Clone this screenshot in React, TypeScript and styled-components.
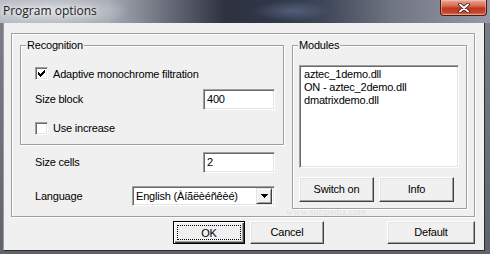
import styled, { createGlobalStyle } from "styled-components";

const GlobalStyle = createGlobalStyle`
  html, body {
    margin: 0;
    padding: 0;
    width: 490px;
    height: 254px;
    overflow: hidden;
    background: #30343f;
  }
  * {
    box-sizing: border-box;
  }
`;

const Window = styled.div`
  position: relative;
  width: 490px;
  height: 254px;
  display: flex;
  flex-direction: column;
  font-family: "Liberation Sans", Arial, sans-serif;
  font-size: 11px;
  letter-spacing: -0.2px;
  color: #000;
`;

const TitleBar = styled.div`
  height: 23px;
  flex: none;
  display: flex;
  align-items: flex-start;
  padding-left: 3px;
  background:
    radial-gradient(ellipse 40px 10px at 292px 11px, rgba(110, 128, 160, 0.5), transparent),
    radial-gradient(ellipse 80px 16px at 50px 11px, rgba(225, 228, 234, 0.8), transparent),
    linear-gradient(
      90deg,
      #b4b8c0 0%,
      #a8acb5 22%,
      #6a6e7a 34%,
      #2e3240 46%,
      #30374a 56%,
      #3e4658 66%,
      #707582 80%,
      #959aa4 100%
    );
`;

const TitleText = styled.span`
  margin-top: 3px;
  font-family: "Open Sans", "Noto Sans", sans-serif;
  font-size: 12px;
  letter-spacing: 0;
  line-height: 16px;
  color: #1c1c1c;
  text-shadow: 0 0 4px rgba(255, 255, 255, 0.9), 0 0 8px rgba(255, 255, 255, 0.7);
`;

const CloseButton = styled.div`
  margin-left: auto;
  margin-right: 3px;
  width: 47px;
  height: 16px;
  display: flex;
  align-items: center;
  justify-content: center;
  border: 1px solid #4a1a14;
  border-top: none;
  border-radius: 0 0 4px 4px;
  background: linear-gradient(180deg, #e9a996 0%, #d66a50 40%, #c0361c 55%, #c84a2e 85%, #e07a5c 100%);
  box-shadow: inset 0 0 0 1px rgba(255, 210, 200, 0.45);
`;

const Frame = styled.div`
  flex: 1;
  display: flex;
  padding: 0 5px 3px 3px;
  background: linear-gradient(180deg, #7a7e88 0%, #5f636c 100%);
`;

const Client = styled.div`
  position: relative;
  flex: 1;
  display: flex;
  flex-direction: column;
  padding: 10px 9px 0 7px;
  background: #f0f0f0;
  border-left: 1px solid #9a9a9a;
  border-right: 1px solid #2c2c2c;
  border-bottom: 1px solid #2c2c2c;
`;

const Panel = styled.div`
  height: 184px;
  display: flex;
  align-items: flex-start;
  gap: 8px;
  padding: 11px 7px 0 8px;
  border: 1px solid #a0a0a0;
  box-shadow: inset 1px 1px 0 #fff, 1px 1px 0 #fff;
`;

const Column = styled.div<{ $w: number }>`
  width: ${(p) => p.$w}px;
  flex: none;
  display: flex;
  flex-direction: column;
`;

const Group = styled.div<{ $h: number }>`
  height: ${(p) => p.$h}px;
  display: flex;
  flex-direction: column;
  border: 1px solid #a0a0a0;
  box-shadow: inset 1px 1px 0 #fff, 1px 1px 0 #fff;
`;

const GroupTitle = styled.span`
  align-self: flex-start;
  height: 13px;
  margin: -7px 0 0 5px;
  padding: 0 1px;
  line-height: 13px;
  background: #f0f0f0;
`;

const Row = styled.div<{ $h: number; $mt?: number; $pl?: number; $pr?: number }>`
  height: ${(p) => p.$h}px;
  margin-top: ${(p) => p.$mt ?? 0}px;
  padding: 0 ${(p) => p.$pr ?? 8}px 0 ${(p) => p.$pl ?? 14}px;
  display: flex;
  align-items: center;
  gap: 5px;
  white-space: nowrap;
`;

const Label = styled.span`
  flex: 1;
`;

const Sunken = styled.div`
  background: #fff;
  border: 1px solid;
  border-color: #a0a0a0 #fff #fff #a0a0a0;
  box-shadow: inset 1px 1px 0 #696969, inset -1px -1px 0 #e3e3e3;
`;

const Check = styled(Sunken)`
  width: 13px;
  height: 13px;
  flex: none;
  padding: 2px 0 0 2px;
  display: flex;
`;

const TextBox = styled(Sunken)<{ $w: number; $h?: number }>`
  width: ${(p) => p.$w}px;
  height: ${(p) => p.$h ?? 21}px;
  flex: none;
  display: flex;
  align-items: center;
  padding: 0 2px 1px 3px;
`;

const ComboBox = styled(TextBox)`
  padding: 0 2px 0 3px;
`;

const Arrow = styled.div`
  margin-left: auto;
  width: 16px;
  height: 16px;
  display: flex;
  align-items: center;
  justify-content: center;
  background: #f0f0f0;
  border: 1px solid;
  border-color: #e3e3e3 #404040 #404040 #e3e3e3;
  box-shadow: inset 1px 1px 0 #fff, inset -1px -1px 0 #a0a0a0;
`;

const ListBox = styled(Sunken)`
  width: 160px;
  height: 103px;
  margin: 13px 0 0 6px;
  padding: 2px 4px;
  line-height: 13px;
`;

const ButtonRow = styled.div<{ $mt: number; $pl: number }>`
  display: flex;
  gap: 5px;
  margin-top: ${(p) => p.$mt}px;
  padding-left: ${(p) => p.$pl}px;
`;

const Button = styled.div<{ $w: number; $h: number; $push?: boolean }>`
  width: ${(p) => p.$w}px;
  height: ${(p) => p.$h}px;
  margin-left: ${(p) => (p.$push ? "auto" : "0")};
  display: flex;
  align-items: center;
  justify-content: center;
  padding-bottom: 1px;
  background: #f0f0f0;
  border: 1px solid;
  border-color: #fff #404040 #404040 #fff;
  box-shadow: inset -1px -1px 0 #a0a0a0, inset 1px 1px 0 #e3e3e3;
`;

const DefaultButton = styled(Button)`
  padding: 3px;
  border: 1px solid #000;
  box-shadow: inset 1px 1px 0 #fff, inset -1px -1px 0 #404040, inset -2px -2px 0 #a0a0a0;
`;

const Focus = styled.span`
  flex: 1;
  align-self: stretch;
  display: flex;
  align-items: center;
  justify-content: center;
  border: 1px dotted #000;
`;

const WatermarkUrl = styled.div`
  position: absolute;
  left: 282px;
  top: 183px;
  font-family: "Liberation Serif", serif;
  font-size: 10px;
  letter-spacing: 0;
  color: rgba(0, 0, 0, 0.1);
  pointer-events: none;
`;

const CheckMark = () => (
  <svg width="7" height="7" viewBox="0 0 7 7" shapeRendering="crispEdges">
    <path
      fill="#000"
      d="M6 0h1v1h-1zM5 1h2v1h-2zM0 2h1v1h-1zM4 2h3v1h-3zM0 3h2v1h-2zM3 3h3v1h-3zM0 4h5v1h-5zM1 5h3v1h-3zM2 6h1v1h-1z"
    />
  </svg>
);

const modules = ["aztec_1demo.dll", "ON - aztec_2demo.dll", "dmatrixdemo.dll"];

export default function App() {
  return (
    <>
      <GlobalStyle />
      <Window>
        <TitleBar>
          <TitleText>Program options</TitleText>
          <CloseButton>
            <svg width="12" height="10" viewBox="0 0 12 10">
              <path d="M2 1.5l8 7M10 1.5l-8 7" stroke="#3a1410" strokeWidth="3.6" strokeLinecap="round" />
              <path d="M2 1.5l8 7M10 1.5l-8 7" stroke="#fff" strokeWidth="2" strokeLinecap="round" />
            </svg>
          </CloseButton>
        </TitleBar>
        <Frame>
          <Client>
            <Panel>
              <Column $w={264}>
                <Group $h={100}>
                  <GroupTitle>Recognition</GroupTitle>
                  <Row $h={27} $mt={8}>
                    <Check>
                      <CheckMark />
                    </Check>
                    <Label>Adaptive monochrome filtration</Label>
                  </Row>
                  <Row $h={24}>
                    <Label>Size block</Label>
                    <TextBox $w={72}>400</TextBox>
                  </Row>
                  <Row $h={26} $mt={4}>
                    <Check />
                    <Label>Use increase</Label>
                  </Row>
                </Group>
                <Row $h={34} $pl={15} $pr={9}>
                  <Label>Size cells</Label>
                  <TextBox $w={72}>2</TextBox>
                </Row>
                <Row $h={33} $pl={15} $pr={9}>
                  <Label>Language</Label>
                  <ComboBox $w={143} $h={20}>
                    English (Àíãëèéñêèé)
                    <Arrow>
                      <svg width="7" height="4" viewBox="0 0 7 4" shapeRendering="crispEdges">
                        <path fill="#000" d="M0 0h7v1h-7zM1 1h5v1h-5zM2 2h3v1h-3zM3 3h1v1h-1z" />
                      </svg>
                    </Arrow>
                  </ComboBox>
                </Row>
              </Column>
              <Column $w={175}>
                <Group $h={164}>
                  <GroupTitle>Modules</GroupTitle>
                  <ListBox>
                    {modules.map((m) => (
                      <div key={m}>{m}</div>
                    ))}
                  </ListBox>
                  <ButtonRow $mt={9} $pl={6}>
                    <Button $w={75} $h={25}>Switch on</Button>
                    <Button $w={75} $h={25}>Info</Button>
                  </ButtonRow>
                </Group>
              </Column>
            </Panel>
            <ButtonRow $mt={4} $pl={162}>
              <DefaultButton $w={72} $h={23}>
                <Focus>OK</Focus>
              </DefaultButton>
              <Button $w={74} $h={23}>Cancel</Button>
              <Button $w={88} $h={23} $push>
                Default
              </Button>
            </ButtonRow>
            <WatermarkUrl>www.softpedia.com</WatermarkUrl>
          </Client>
        </Frame>
      </Window>
    </>
  );
}
